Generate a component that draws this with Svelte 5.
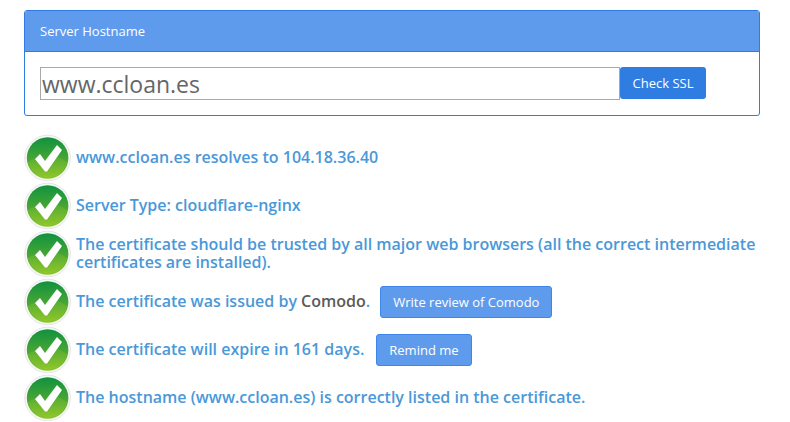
<script>
	const host = 'www.ccloan.es';
	const ip = '104.18.36.40';
</script>

{#snippet tick()}
	<svg class="tick" viewBox="0 0 48 48" width="48" height="48" aria-hidden="true">
		<defs>
			<linearGradient id="disc" x1="0" y1="0" x2="0" y2="1">
				<stop offset="0" stop-color="#109140" />
				<stop offset="0.55" stop-color="#4aa733" />
				<stop offset="1" stop-color="#8fc52a" />
			</linearGradient>
		</defs>
		<circle cx="23.6" cy="25" r="22.8" fill="#f8f9f7" stroke="#e4e6e4" stroke-width="1" />
		<circle cx="23.6" cy="25" r="20.8" fill="url(#disc)" />
		<path d="M3.5 29 L14 24 L24 31 L34 24 L43.7 29 A20.8 20.8 0 0 1 3.5 29 Z" fill="#a6d02c" opacity="0.22" />
		<path d="M11 26 L16 21 L21 28 L33 12 L38 17 L23 38.5 L21 38.5 Z" fill="#fff" />
	</svg>
{/snippet}

<div class="page">
	<section class="panel">
		<header>Server Hostname</header>
		<div class="body">
			<input value={host} />
			<button class="check">Check SSL</button>
		</div>
	</section>

	<ul>
		<li>{@render tick()}<p>{host} resolves to {ip}</p></li>
		<li>{@render tick()}<p>Server Type: cloudflare-nginx</p></li>
		<li>{@render tick()}<p>The certificate should be trusted by all major web browsers (all the correct intermediate certificates are installed).</p></li>
		<li>
			{@render tick()}
			<p>The certificate was issued by <b>Comodo</b>.</p>
			<button class="action review">Write review of Comodo</button>
		</li>
		<li>
			{@render tick()}
			<p>The certificate will expire in 161 days.</p>
			<button class="action">Remind me</button>
		</li>
		<li>{@render tick()}<p>The hostname ({host}) is correctly listed in the certificate.</p></li>
	</ul>
</div>

<style>
	:global(body) {
		background: #fff;
		font-family: "Open Sans", sans-serif;
	}

	.page {
		padding: 10px 30px 0 24px;
	}

	.panel {
		border: 1px solid #2f7de1;
		border-radius: 3px;
		overflow: hidden;
	}

	header {
		background: #5f9bed;
		border-bottom: 1px solid #2f7de1;
		color: #fff;
		font-size: 13px;
		line-height: 18px;
		padding: 11px 15px 11px;
	}

	.body {
		display: flex;
		align-items: flex-start;
		padding: 15px;
		height: 33px;
	}

	input {
		box-sizing: border-box;
		width: 580px;
		height: 33px;
		border: 1px solid #a9a9a9;
		padding: 0 1px;
		font-family: inherit;
		font-size: 23px;
		color: #666;
		outline: none;
	}

	button {
		font-family: inherit;
		color: #fff;
		font-size: 13px;
		border-radius: 3px;
		cursor: pointer;
	}

	.check {
		width: 86px;
		height: 32px;
		background: #2f7de1;
		border: 0;
		padding: 0;
	}

	ul {
		list-style: none;
		margin: 17px 0 0;
		padding: 0;
	}

	li {
		display: flex;
		align-items: center;
		min-height: 48px;
	}

	.tick {
		flex: none;
		margin-right: 4px;
		overflow: visible;
	}

	p {
		margin: 0;
		color: #4a98d9;
		font-size: 16px;
		font-weight: 600;
		line-height: 18px;
	}

	b {
		font-weight: 600;
		color: #5a5a5a;
	}

	.action {
		height: 32px;
		margin: 2px 0 0 12px;
		padding: 0 12px;
		background: #5f9bed;
		border: 1px solid #3d87ea;
	}

	.review {
		margin-left: 10px;
	}
</style>
